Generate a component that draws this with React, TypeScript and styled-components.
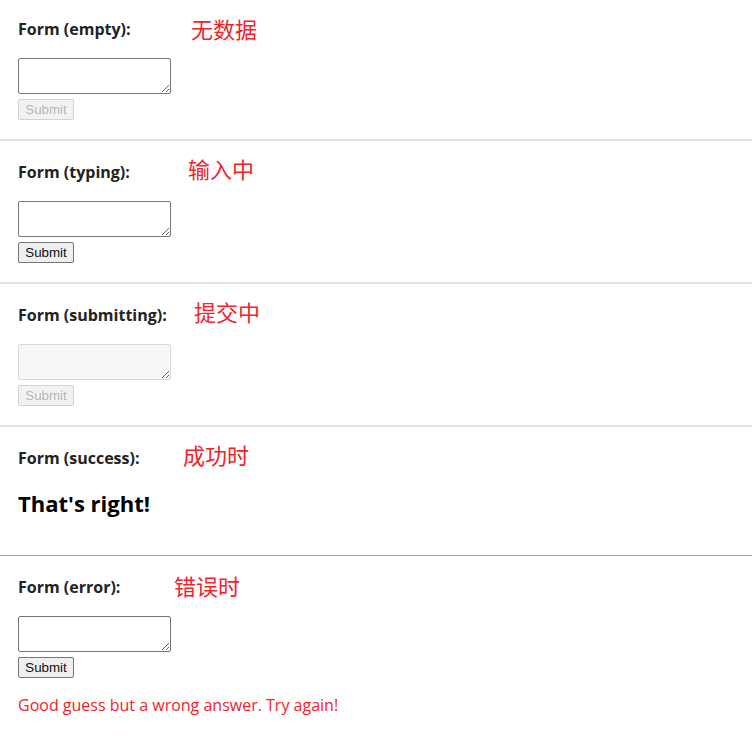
import React from "react";
import styled, { createGlobalStyle } from "styled-components";

const Global = createGlobalStyle`
  html, body { margin: 0; padding: 0; background: #fff; }
  body { font-family: "Open Sans", "Noto Sans", sans-serif; color: #222; }
`;

const Page = styled.div`
  display: flex;
  flex-direction: column;
  width: 752px;
`;

const Section = styled.section<{ $border?: "light" | "dark" | "none"; $pt?: number; $pb?: number }>`
  position: relative;
  display: flex;
  flex-direction: column;
  align-items: flex-start;
  padding: ${(p) => p.$pt ?? 20}px 18px ${(p) => p.$pb ?? 19}px;
  border-bottom: ${(p) =>
    p.$border === "dark" ? "1px solid #a9a9a9" : p.$border === "none" ? "none" : "2px solid #e3e3e3"};
`;

const Heading = styled.h4`
  margin: 0;
  font-size: 16px;
  line-height: 22px;
  font-weight: 700;
  color: #222;
`;

const Note = styled.span<{ $left: number; $top: number }>`
  position: absolute;
  left: ${(p) => p.$left}px;
  top: ${(p) => p.$top}px;
  font-family: "Noto Sans CJK SC", sans-serif;
  font-size: 22px;
  line-height: 28px;
  color: #f0222c;
`;

const Form = styled.form`
  display: flex;
  flex-direction: column;
  align-items: flex-start;
  gap: 5px;
  margin-top: 18px;
`;

const Area = styled.textarea`
  box-sizing: border-box;
  width: 153px;
  height: 36px;
  margin: 0;
  border: 1px solid #767676;
  border-radius: 2px;
  background: #fff;
  font-family: "Liberation Mono", monospace;
  font-size: 13px;
  &:disabled {
    border-color: #d9d9d9;
    background: #f7f7f7;
  }
`;

const Button = styled.button`
  box-sizing: border-box;
  height: 21px;
  width: 56px;
  padding: 0 6px;
  margin: 0;
  font-family: "Liberation Sans", Arial, sans-serif;
  font-size: 13.33px;
  color: #101010;
  background: #efefef;
  border: 1px solid #767676;
  border-radius: 2px;
  &:disabled {
    color: rgba(16, 16, 16, 0.3);
    background: rgba(239, 239, 239, 0.8);
    border-color: rgba(118, 118, 118, 0.25);
  }
`;

const Success = styled.h2`
  margin: 19px 0 0;
  font-size: 22px;
  line-height: 30px;
  font-weight: 700;
  color: #000;
`;

const ErrorText = styled.p`
  margin: 16px 0 0;
  font-size: 16px;
  line-height: 22px;
  color: #f0222c;
`;

function QuizForm({ textDisabled, buttonDisabled }: { textDisabled?: boolean; buttonDisabled?: boolean }) {
  return (
    <Form onSubmit={(e) => e.preventDefault()}>
      <Area disabled={textDisabled} />
      <Button disabled={buttonDisabled}>Submit</Button>
    </Form>
  );
}

export default function App() {
  return (
    <Page>
      <Global />
      <Section $pt={18}>
        <Heading>Form (empty):</Heading>
        <Note $left={191} $top={14}>无数据</Note>
        <QuizForm buttonDisabled />
      </Section>
      <Section>
        <Heading>Form (typing):</Heading>
        <Note $left={188} $top={13}>输入中</Note>
        <QuizForm />
      </Section>
      <Section>
        <Heading>Form (submitting):</Heading>
        <Note $left={194} $top={13}>提交中</Note>
        <QuizForm textDisabled buttonDisabled />
      </Section>
      <Section $border="dark" $pb={37}>
        <Heading>Form (success):</Heading>
        <Note $left={183} $top={13}>成功时</Note>
        <Success>That's right!</Success>
      </Section>
      <Section $border="none" $pb={30}>
        <Heading>Form (error):</Heading>
        <Note $left={174} $top={15}>错误时</Note>
        <QuizForm />
        <ErrorText>Good guess but a wrong answer. Try again!</ErrorText>
      </Section>
    </Page>
  );
}
